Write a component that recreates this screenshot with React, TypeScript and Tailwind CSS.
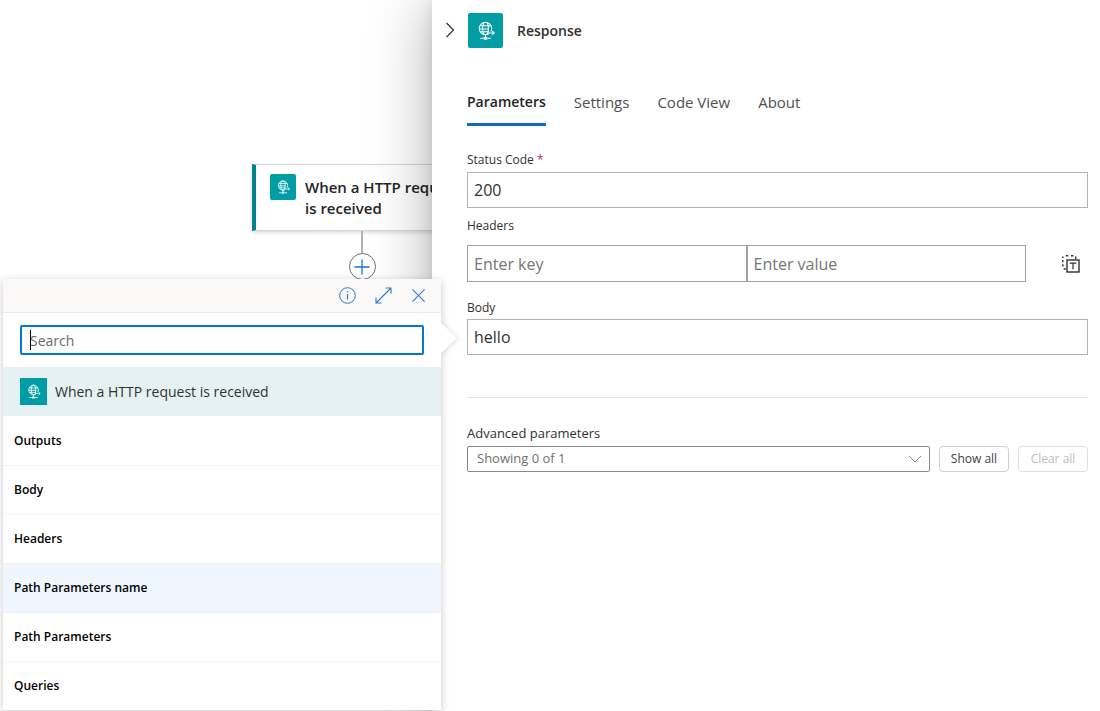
import { useState } from "react";

const tabs = ["Parameters", "Settings", "Code View", "About"];

const outputs = [
    "Outputs",
    "Body",
    "Headers",
    "Path Parameters name",
    "Path Parameters",
    "Queries",
];

const RequestIcon = ({ className }: { className: string }) => (
    <span className={`flex shrink-0 items-center justify-center bg-[#009da5] ${className}`}>
        <svg viewBox="0 0 36 36" className="h-full w-full" fill="none" stroke="#fff" strokeWidth="1.1">
            <circle cx="18" cy="16" r="6.4" />
            <ellipse cx="18" cy="16" rx="3" ry="6.4" />
            <path d="M12.3 13.2h11.4M11.6 16.4h10M12.3 19.2h9.6M18 22.4v2.4" />
            <path d="M12.6 26h3M20.4 26h3.2" />
            <path d="M21.5 20.6h5" stroke="#009da5" strokeWidth="3.4" />
            <path d="M20.4 20.6h6.4M24.9 18.6l2.1 2-2.1 2" />
            <rect x="15.9" y="24.6" width="4.2" height="2.8" rx="1" fill="#fff" stroke="none" />
        </svg>
    </span>
);

const TokenPicker = () => (
    <section
        aria-label="Dynamic content"
        className="absolute right-full bottom-[-355px] mr-[26px] w-[438px] bg-white shadow-[0_2px_8px_rgba(0,0,0,0.22)]"
    >
        <span className="absolute top-[48px] right-[-11px] h-[22px] w-[22px] rotate-45 bg-white shadow-[2px_-1px_5px_rgba(0,0,0,0.1)]" />
        <div className="relative bg-white">
            <div className="flex h-[34px] items-center justify-end gap-[19px] border-b border-[#edebe9] bg-[#faf9f8] pr-[15px] text-[#2b78d0]">
                <button aria-label="Info">
                    <svg width="17" height="17" viewBox="0 0 17 17" fill="none" stroke="currentColor">
                        <circle cx="8.5" cy="8.5" r="7.8" />
                        <path d="M8.5 7v5.5M8.5 4.2v1.4" strokeWidth="1.2" />
                    </svg>
                </button>
                <button aria-label="Expand">
                    <svg width="17" height="17" viewBox="0 0 17 17" fill="none" stroke="currentColor" strokeWidth="1.1">
                        <path d="M1 16L16 1M10.5 1H16v5.5M1 10.5V16h5.5" />
                    </svg>
                </button>
                <button aria-label="Close">
                    <svg width="15" height="15" viewBox="0 0 16 16" fill="none" stroke="currentColor" strokeWidth="1.1">
                        <path d="M1.5 1.5l13 13M14.5 1.5l-13 13" />
                    </svg>
                </button>
            </div>

            <div className="relative px-[17px] py-3">
                <input
                    aria-label="Search"
                    placeholder="Search"
                    className="block h-[30px] w-full rounded-[2px] border-2 border-[#0078d4] px-2 text-sm text-[#323130] outline-none placeholder:text-[#6b6a68]"
                />
                <span className="absolute top-[17px] left-[27px] h-5 w-px bg-black" />
            </div>

            <div className="flex h-[49px] items-center gap-2 bg-[#e6f1f3] px-[17px] text-sm text-[#323130]">
                <RequestIcon className="h-[27px] w-[27px]" />
                When a HTTP request is received
            </div>

            <ul className="pt-px">
                {outputs.map((name) => (
                    <li key={name} className="border-b border-[#f3f2f1] last:border-b-0">
                        <button
                            className={`block h-12 w-full px-[11px] text-left text-xs font-semibold text-black ${
                                name === "Path Parameters name" ? "bg-[#eff6fe]" : "bg-white"
                            }`}
                        >
                            {name}
                        </button>
                    </li>
                ))}
            </ul>
        </div>
    </section>
);

const Canvas = () => (
    <div className="min-w-0 flex-1 overflow-hidden pt-[164px] pl-[252px]">
        <div className="flex w-[220px] flex-col items-center">
            <div className="flex w-full gap-[9px] border-y border-l-4 border-y-[#d6d6d6] border-l-[#00828a] bg-white pt-[9px] pr-2 pb-[11px] pl-[14px] shadow-[0_2px_4px_rgba(0,0,0,0.14)]">
                <RequestIcon className="h-[26px] w-[26px] rounded-[2px]" />
                <div className="pt-[3px] text-[15px] leading-[21px] font-semibold text-[#242424]">
                    When a HTTP request is received
                </div>
            </div>
            <span className="h-[22px] w-0.5 bg-[#b1b1b7]" />
            <button
                aria-label="Insert a new step"
                className="flex h-[27px] w-[27px] items-center justify-center rounded-full border border-[#6e6e6e] bg-white text-[#0f78d4]"
            >
                <svg width="16" height="16" viewBox="0 0 16 16" stroke="currentColor" strokeWidth="1.3">
                    <path d="M8 .5v15M.5 8h15" />
                </svg>
            </button>
        </div>
    </div>
);

export default function App() {
    const [tab, setTab] = useState("Parameters");

    return (
        <div className="flex h-screen overflow-hidden bg-white font-['Open_Sans','Noto_Sans',sans-serif] text-[#323130]">
            <Canvas />

            <main className="relative w-[668px] shrink-0 bg-white pt-3 pr-3 pl-[35px] shadow-[0_5px_58px_rgba(0,0,0,0.32),0_1px_14px_rgba(0,0,0,0.1)]">
                <header className="-ml-[35px] flex h-9 items-center">
                    <button aria-label="Collapse panel" className="flex w-[36px] justify-center">
                        <svg width="10" height="16" viewBox="0 0 10 16" fill="none" stroke="#323130" strokeWidth="1.2">
                            <path d="M1.5 1l7 7-7 7" />
                        </svg>
                    </button>
                    <RequestIcon className="h-[35px] w-[35px] rounded-[2px]" />
                    <h1 className="ml-[14px] pt-px text-sm font-semibold">Response</h1>
                </header>

                <div role="tablist" className="mt-[42px] flex gap-7 text-[15px] leading-6">
                    {tabs.map((name) => (
                        <button
                            key={name}
                            role="tab"
                            aria-selected={tab === name}
                            onClick={() => setTab(name)}
                            className={`border-b-[3px] pb-[9px] ${
                                tab === name
                                    ? "border-[#0f6cbd] text-sm leading-6 font-semibold text-[#242424]"
                                    : "border-transparent text-[#505050]"
                            }`}
                        >
                            {name}
                        </button>
                    ))}
                </div>

                <div className="mt-6">
                    <label htmlFor="status" className="block text-xs leading-5">
                        Status Code <span className="text-[#c4314b]">*</span>
                    </label>
                    <input
                        id="status"
                        defaultValue="200"
                        className="mt-0.5 block h-9 w-full border border-[#b3b3b3] px-1.5 text-base outline-none"
                    />
                </div>

                <fieldset className="mt-2">
                    <legend className="text-xs leading-5">Headers</legend>
                    <div className="mt-[9px] flex items-center">
                        <div className="flex min-w-0 flex-1">
                            <input
                                aria-label="Header key"
                                placeholder="Enter key"
                                className="h-[37px] min-w-0 flex-1 border border-[#a0a0a0] px-1.5 text-base outline-none placeholder:text-[#767676]"
                            />
                            <input
                                aria-label="Header value"
                                placeholder="Enter value"
                                className="h-[37px] min-w-0 flex-1 border border-[#a0a0a0] px-1.5 text-base outline-none placeholder:text-[#767676]"
                            />
                        </div>
                        <button aria-label="Switch to text mode" className="mr-2 ml-9">
                            <svg width="18" height="18" viewBox="0 0 18 18" fill="none" stroke="#323130">
                                <path d="M.8 3V1.4M3.8.8h2.4M9 .8h2.4M13.7 1.6v2.6M.8 5v2.2M.8 9.2v2.2M1.6 14h2.2" strokeWidth="1.4" />
                                <rect x="5" y="5" width="12" height="12" strokeWidth="1.4" />
                                <path d="M7.6 8.2h6.8M11 8.2v6" strokeWidth="1.2" />
                            </svg>
                        </button>
                    </div>
                </fieldset>

                <div className="mt-4">
                    <label htmlFor="body" className="block text-xs leading-5">
                        Body
                    </label>
                    <div className="relative">
                        <input
                            id="body"
                            defaultValue="hello"
                            className="mt-px block h-9 w-full border border-[#b3b3b3] px-1.5 text-base outline-none"
                        />
                        <TokenPicker />
                    </div>
                </div>

                <div className="mt-[42px] border-t border-[#e0e0e0] pt-[25px]">
                    <label htmlFor="advanced" className="block text-[13px] leading-5">
                        Advanced parameters
                    </label>
                    <div className="mt-[3px] flex h-[26px] gap-[9px] text-xs">
                        <div className="relative flex-1">
                            <select
                                id="advanced"
                                className="h-full w-full appearance-none rounded-[2px] border border-[#8a8a8a] bg-white pl-[9px] text-[13px] text-[#707070]"
                            >
                                <option>Showing 0 of 1</option>
                            </select>
                            <svg
                                width="14"
                                height="8"
                                viewBox="0 0 14 8"
                                fill="none"
                                stroke="#8a8a8a"
                                className="pointer-events-none absolute top-[9px] right-2"
                            >
                                <path d="M1 1l6 6 6-6" />
                            </svg>
                        </div>
                        <button className="w-[70px] rounded-[4px] border border-[#d1d1d1] text-[#424242]">Show all</button>
                        <button disabled className="w-[70px] rounded-[4px] border border-[#e0e0e0] text-[#bdbdbd]">
                            Clear all
                        </button>
                    </div>
                </div>
            </main>
        </div>
    );
}
